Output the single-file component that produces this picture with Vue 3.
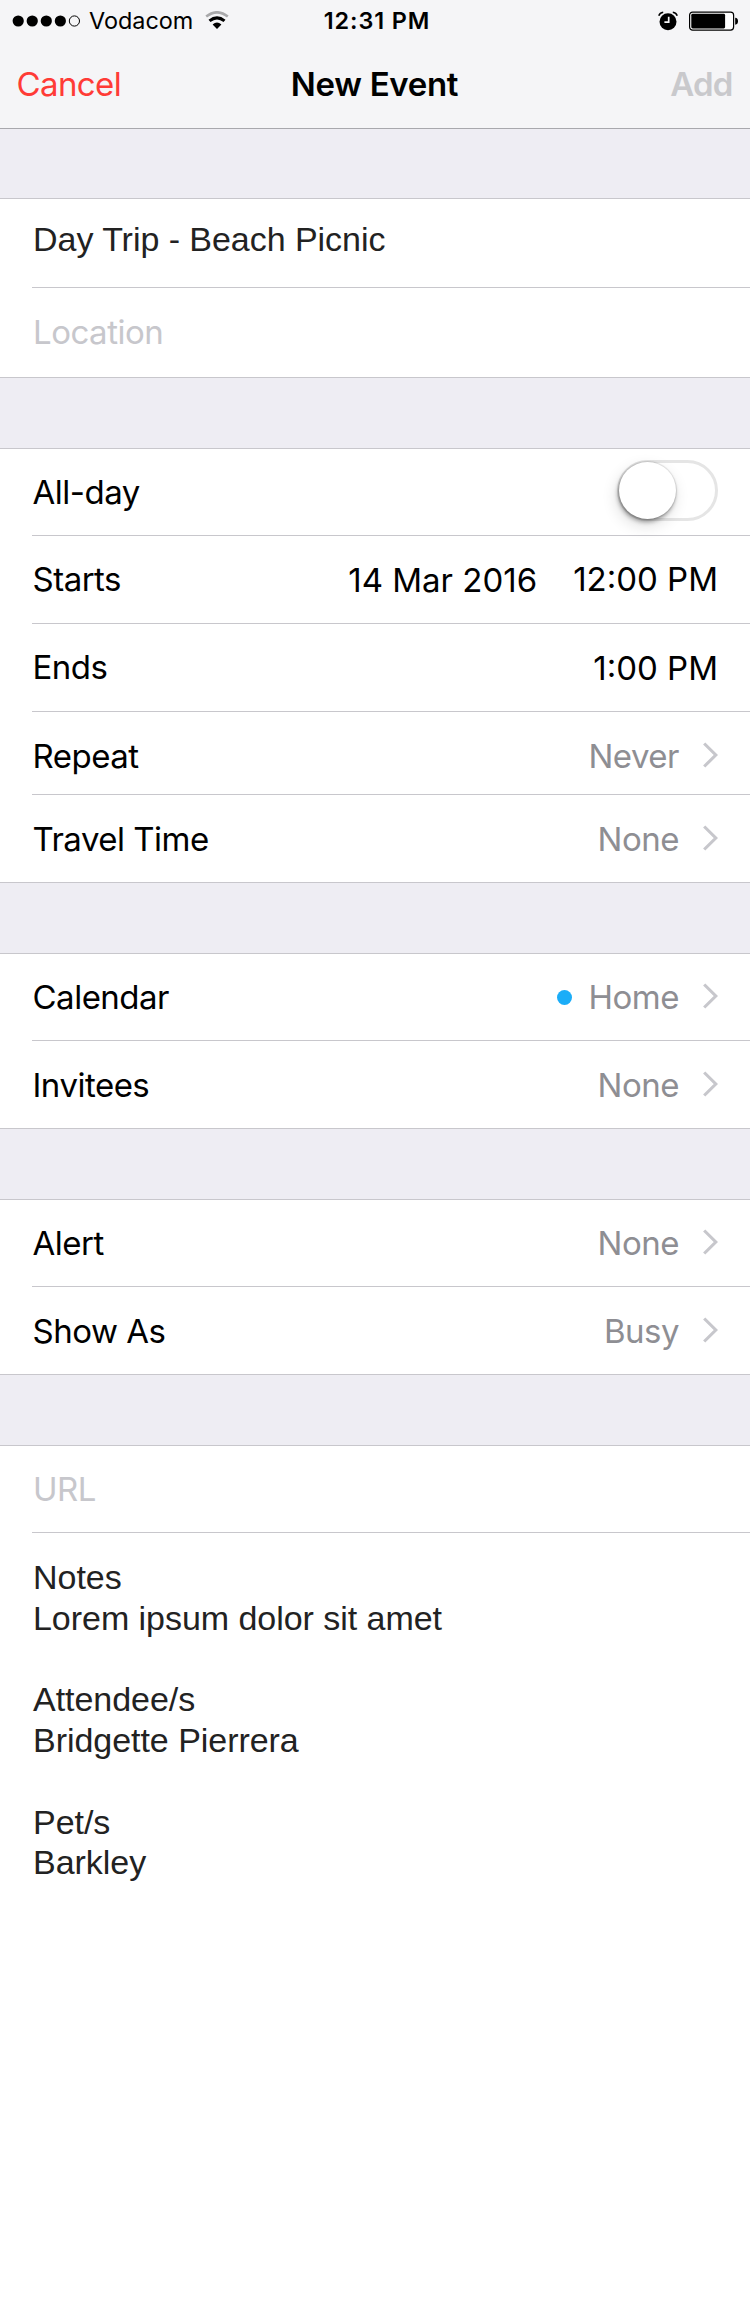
<script setup>
import { ref } from 'vue'

const allDay = ref(false)

// height includes the divider above a row; pad is [top, bottom]
const groups = [
  [
    { label: 'All-day', toggle: true, height: 86 },
    { label: 'Starts', date: '14 Mar 2016', time: '12:00 PM', height: 88, pad: [0, 1] },
    { label: 'Ends', time: '1:00 PM', low: true, height: 88, pad: [0, 1] },
    { label: 'Repeat', value: 'Never', height: 83, pad: [6, 0] },
    { label: 'Travel Time', value: 'None', height: 88, pad: [1, 0] },
  ],
  [
    { label: 'Calendar', value: 'Home', dot: true, height: 86 },
    { label: 'Invitees', value: 'None', height: 88, pad: [1, 0] },
  ],
  [
    { label: 'Alert', value: 'None', height: 86 },
    { label: 'Show As', value: 'Busy', height: 88, pad: [1, 0] },
  ],
]

function rowStyle({ height, pad = [0, 0] }) {
  return { height: `${height}px`, paddingTop: `${pad[0]}px`, paddingBottom: `${pad[1]}px` }
}

const notes = `Notes
Lorem ipsum dolor sit amet

Attendee/s
Bridgette Pierrera

Pet/s
Barkley`
</script>

<template>
  <main class="screen">
    <header class="top">
      <div class="status">
        <div class="side">
          <svg class="signal" width="64" height="14" viewBox="0 0 64 14">
            <circle v-for="n in 4" :key="n" :cx="6.2 + (n - 1) * 14.05" cy="7" r="5.6" />
            <circle cx="62.4" cy="7" r="5.1" fill="none" stroke="#000" />
          </svg>
          <span class="carrier">Vodacom</span>
          <svg class="wifi" width="24" height="19" viewBox="0 0 24 19">
            <path d="M1.2 5.6Q12-3 22.8 5.6" fill="none" stroke="#a9a9ab" stroke-width="2.6" />
            <path d="M4.5 9.9Q12 3.8 19.5 9.9" fill="none" stroke="#000" stroke-width="3.1" />
            <path d="M7.6 13.5Q12 9.6 16.4 13.5L12 18Z" />
          </svg>
        </div>
        <span class="clock">12:31 PM</span>
        <div class="side end">
          <svg class="alarm" width="20" height="20" viewBox="0 0 20 20">
            <circle cx="10" cy="10.7" r="8.5" />
            <path d="M.8 4.8Q1.7 1.8 5.2 1.3M19.2 4.8Q18.3 1.8 14.8 1.3" fill="none" stroke="#000" stroke-width="1.5" />
            <path d="M10.7 5.8V11.2H6.4" fill="none" stroke="#f5f5f7" stroke-width="1.7" />
          </svg>
          <svg class="battery" width="50" height="20" viewBox="0 0 50 20">
            <rect x=".6" y="1.1" width="44" height="18" rx="3" fill="#fff" stroke="#000" stroke-width="1.2" />
            <rect x="2.3" y="2.8" width="33.8" height="14.7" rx="1.4" />
            <path d="M46.2 6.8Q49 7.2 49 10.2T46.2 13.7Z" />
          </svg>
        </div>
      </div>
      <nav class="nav">
        <span class="cancel">Cancel</span>
        <h1 class="title">New Event</h1>
        <span class="add">Add</span>
      </nav>
    </header>

    <section class="group first">
      <div class="row name">Day Trip - Beach Picnic</div>
      <div class="row location">Location</div>
    </section>

    <section v-for="(rows, g) in groups" :key="g" class="group">
      <div v-for="row in rows" :key="row.label" class="row" :style="rowStyle(row)">
        <span class="label">{{ row.label }}</span>
        <button v-if="row.toggle" class="switch" :aria-pressed="allDay"><i class="knob"></i></button>
        <span v-if="row.date" class="date">{{ row.date }}</span>
        <span v-if="row.time" class="time" :class="{ low: row.low }">{{ row.time }}</span>
        <i v-if="row.dot" class="dot"></i>
        <template v-if="row.value">
          <span class="value">{{ row.value }}</span>
          <svg class="chevron" width="18" height="28" viewBox="0 0 18 28">
            <path d="M2.2 2.5L13.8 14L2.2 25.5" fill="none" stroke="#c7c7cc" stroke-width="3.1" />
          </svg>
        </template>
      </div>
    </section>

    <section class="group last">
      <div class="row url">URL</div>
      <div class="notes">{{ notes }}</div>
    </section>
  </main>
</template>

<style>
body {
  margin: 0;
  background: #fff;
}
</style>

<style scoped>
.screen {
  width: 750px;
  height: 2322px;
  overflow: hidden;
  background: #eeedf3;
  color: #000;
  font: 400 33px/40px Inter, "Liberation Sans", sans-serif;
  letter-spacing: -0.5px;
  display: flex;
  flex-direction: column;
}
.top {
  box-sizing: border-box;
  height: 129px;
  flex: none;
  background: #f5f5f7;
  border-bottom: 1px solid #a8a8ad;
}
.status {
  box-sizing: border-box;
  height: 40px;
  display: grid;
  grid-template-columns: 1fr auto 1fr;
  align-items: center;
  padding: 1px 11px 0 12px;
}
.side {
  display: flex;
  align-items: center;
}
.end {
  justify-content: flex-end;
}
.signal {
  overflow: visible;
}
.carrier {
  margin-left: 13px;
  font-size: 23.4px;
  letter-spacing: 0;
}
.wifi {
  margin: 0 0 1px 12px;
}
.clock {
  font-size: 23.4px;
  font-weight: 600;
  letter-spacing: 0.9px;
  margin-left: 3px;
}
.alarm {
  margin-right: 11px;
}
.nav {
  height: 88px;
  display: grid;
  grid-template-columns: 1fr auto 1fr;
  align-items: center;
  padding: 0 17.5px 0 16.5px;
}
.cancel {
  color: #ff3b36;
  letter-spacing: -0.6px;
}
.title {
  margin: 0;
  font-size: 33px;
  font-weight: 600;
  letter-spacing: -0.3px;
}
.add {
  justify-self: end;
  color: #c9c9cc;
  font-weight: 600;
  letter-spacing: -0.8px;
}
.group {
  flex: none;
  margin-top: 70px;
  background: #fff;
  border: solid #c8c7cc;
  border-width: 1px 0;
}
.first {
  margin-top: 69px;
}
.last {
  flex: 1;
  border-bottom: 0;
}
.row {
  display: flex;
  align-items: center;
  box-sizing: border-box;
  margin-left: 32px;
  padding: 0 32px 0 1px;
}
.row + .row,
.notes {
  border-top: 1px solid #c8c7cc;
}
.name {
  height: 88px;
  padding-bottom: 8px;
  color: #222;
  font-family: "Liberation Sans", Arial, sans-serif;
  font-size: 34px;
  letter-spacing: -0.04px;
}
.location {
  height: 90px;
  padding-bottom: 2px;
  color: #c7c7cc;
}
.url {
  height: 86px;
  color: #c7c7cc;
}
.label {
  margin: 0 auto 0 -0.5px;
}
.date,
.time {
  letter-spacing: 0;
}
.date {
  position: relative;
  top: 1px;
  margin-right: 36px;
}
.low {
  position: relative;
  top: 1px;
}
.value {
  color: #8e8e93;
  margin-right: 23px;
}
.dot {
  width: 15px;
  height: 15px;
  border-radius: 50%;
  background: #1badf8;
  margin-right: 17px;
}
.chevron {
  margin: 0 -2px 2px 0;
}
.switch {
  box-sizing: border-box;
  width: 101px;
  height: 61px;
  margin-bottom: 3px;
  padding: 0;
  border: 3px solid #e5e5e5;
  border-radius: 31px;
  background: #fff;
}
.knob {
  display: block;
  width: 57px;
  height: 57px;
  margin: -1px;
  border-radius: 50%;
  background: #fff;
  box-shadow: 0 0 1px 1px rgba(0, 0, 0, 0.1), -1px 3px 4px rgba(0, 0, 0, 0.35), -2px 6px 16px rgba(0, 0, 0, 0.14);
}
.notes {
  margin-left: 32px;
  padding: 24px 32px 0 1px;
  color: #222;
  font: 34px/40.77px "Liberation Sans", Arial, sans-serif;
  letter-spacing: -0.04px;
  white-space: pre-line;
}
</style>
